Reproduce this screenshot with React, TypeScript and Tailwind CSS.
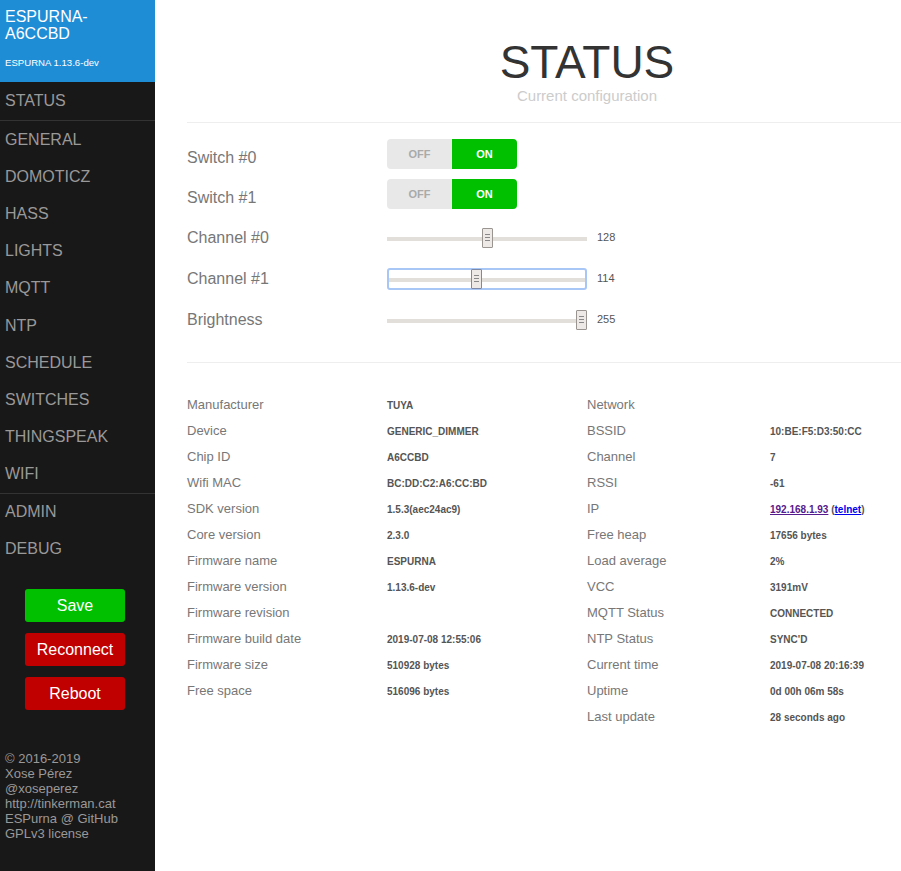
import React from 'react';

const menu = ['GENERAL', 'DOMOTICZ', 'HASS', 'LIGHTS', 'MQTT', 'NTP', 'SCHEDULE', 'SWITCHES', 'THINGSPEAK', 'WIFI'];

const leftInfo: [string, string][] = [
  ['Manufacturer', 'TUYA'],
  ['Device', 'GENERIC_DIMMER'],
  ['Chip ID', 'A6CCBD'],
  ['Wifi MAC', 'BC:DD:C2:A6:CC:BD'],
  ['SDK version', '1.5.3(aec24ac9)'],
  ['Core version', '2.3.0'],
  ['Firmware name', 'ESPURNA'],
  ['Firmware version', '1.13.6-dev'],
  ['Firmware revision', ''],
  ['Firmware build date', '2019-07-08 12:55:06'],
  ['Firmware size', '510928 bytes'],
  ['Free space', '516096 bytes'],
];

const rightInfo: [string, string][] = [
  ['Network', ''],
  ['BSSID', '10:BE:F5:D3:50:CC'],
  ['Channel', '7'],
  ['RSSI', '-61'],
  ['IP', '__ip__'],
  ['Free heap', '17656 bytes'],
  ['Load average', '2%'],
  ['VCC', '3191mV'],
  ['MQTT Status', 'CONNECTED'],
  ['NTP Status', "SYNC'D"],
  ['Current time', '2019-07-08 20:16:39'],
  ['Uptime', '0d 00h 06m 58s'],
  ['Last update', '28 seconds ago'],
];

function Toggle() {
  return (
    <div className="flex w-[130px] h-[30px] rounded-[4px] overflow-hidden text-[11px] font-bold">
      <div className="w-[65px] bg-[#e8e8e8] text-[#aaa] flex items-center justify-center">OFF</div>
      <div className="w-[65px] bg-[#00c000] text-white flex items-center justify-center">ON</div>
    </div>
  );
}

function Slider({ value, focused }: { value: number; focused?: boolean }) {
  // thumb travels over 200 - 11 px
  const left = Math.round((value / 255) * 189);
  return (
    <div className="flex items-center">
      <div
        className={`relative w-[200px] h-[22px] rounded-[3px] border-2 ${focused ? 'border-[#a8c6f6]' : 'border-transparent'}`}
      >
        <div className={`absolute top-[8px] h-[4px] bg-[#e2ded9] ${focused ? 'left-0 right-0' : 'left-[-2px] right-[-2px]'}`} />
        <div
          className={`absolute top-[-1px] w-[11px] h-[20px] bg-[#ece9e6] border rounded-[1px] flex flex-col items-center justify-center gap-[2px] ${focused ? 'border-[#7d89a6]' : 'border-[#9a9590]'}`}
          style={{ left: left - 2 }}
        >
          <span className="block w-[5px] h-px bg-[#888]" />
          <span className="block w-[5px] h-px bg-[#888]" />
          <span className="block w-[5px] h-px bg-[#888]" />
        </div>
      </div>
      <span className="ml-[10px] text-[11px] text-[#555]">{value}</span>
    </div>
  );
}

function InfoCol({ rows, valueOffset }: { rows: [string, string][]; valueOffset: string }) {
  return (
    <div className="w-[400px]">
      {rows.map(([label, value]) => (
        <div key={label} className="flex items-center h-[26px]">
          <div className={`${valueOffset} shrink-0 text-[13px] text-[#777]`}>{label}</div>
          <div className="text-[10px] font-bold text-[#555]">
            {value === '__ip__' ? (
              <span>
                <a className="text-[#551a8b] underline" href="#">192.168.1.93</a>{' '}
                (<a className="text-[#0000ee] underline" href="#">telnet</a>)
              </span>
            ) : (
              value
            )}
          </div>
        </div>
      ))}
    </div>
  );
}

export default function App() {
  return (
    <div className="flex min-h-screen w-[901px] overflow-hidden bg-white" style={{ fontFamily: '"Liberation Sans", Arial, sans-serif' }}>
      {/* Sidebar */}
      <div className="w-[155px] shrink-0 bg-[#191818] flex flex-col">
        <div className="h-[82px] bg-[#1f8dd6] px-[5px] pt-[8px] text-white">
          <div className="text-[16px] leading-[17px]">ESPURNA-<br />A6CCBD</div>
          <div className="mt-[14px] text-[9.6px]">ESPURNA 1.13.6-dev</div>
        </div>
        <div className="h-[39px] flex items-center px-[5px] text-[16px] text-[#999] border-b border-[#333]">STATUS</div>
        {menu.map((m) => (
          <div key={m} className="h-[37.2px] flex items-center px-[5px] text-[16px] text-[#999]">{m}</div>
        ))}
        <div className="h-[38px] flex items-center px-[5px] text-[16px] text-[#999] border-t border-[#333]">ADMIN</div>
        <div className="h-[37.2px] flex items-center px-[5px] text-[16px] text-[#999]">DEBUG</div>

        <div className="mt-[21px] ml-[25px] flex flex-col gap-[11px]">
          <button className="w-[100px] h-[33px] rounded-[3px] bg-[#00c000] text-white text-[16px]">Save</button>
          <button className="w-[100px] h-[33px] rounded-[3px] bg-[#c00000] text-white text-[16px]">Reconnect</button>
          <button className="w-[100px] h-[33px] rounded-[3px] bg-[#c00000] text-white text-[16px]">Reboot</button>
        </div>

        <div className="mt-[41px] px-[5px] text-[13px] leading-[15px] text-[#999]">
          <div>© 2016-2019</div>
          <div>Xose Pérez</div>
          <div>@xoseperez</div>
          <div>http://tinkerman.cat</div>
          <div>ESPurna @ GitHub</div>
          <div>GPLv3 license</div>
        </div>
      </div>

      {/* Main */}
      <div className="flex-1 pl-[32px]">
        <div className="w-[800px]">
          <div className="pt-[39px] pb-[17px] border-b border-[#eee] text-center">
            <h1 className="text-[46px] leading-[46px] text-[#333]">STATUS</h1>
            <p className="mt-[2px] text-[15px] leading-[18px] text-[#ccc]">Current configuration</p>
          </div>

          <div className="pt-[16px] pb-[27px] border-b border-[#eee]">
            {['Switch #0', 'Switch #1'].map((s) => (
              <div key={s} className="flex items-center h-[30px] mb-[10px]">
                <div className="w-[200px] pt-[8px] text-[16px] text-[#777]">{s}</div>
                <Toggle />
              </div>
            ))}
            <div className="pt-[3px]">
              {[
                ['Channel #0', 128, false],
                ['Channel #1', 114, true],
                ['Brightness', 255, false],
              ].map(([label, v, f]) => (
                <div key={label as string} className="flex items-center h-[31px] mb-[10px] last:mb-0">
                  <div className="w-[200px] text-[16px] text-[#777]">{label as string}</div>
                  <Slider value={v as number} focused={f as boolean} />
                </div>
              ))}
            </div>
          </div>

          <div className="pt-[29px] flex">
            <InfoCol rows={leftInfo} valueOffset="w-[200px]" />
            <InfoCol rows={rightInfo} valueOffset="w-[183px]" />
          </div>
        </div>
      </div>
    </div>
  );
}
